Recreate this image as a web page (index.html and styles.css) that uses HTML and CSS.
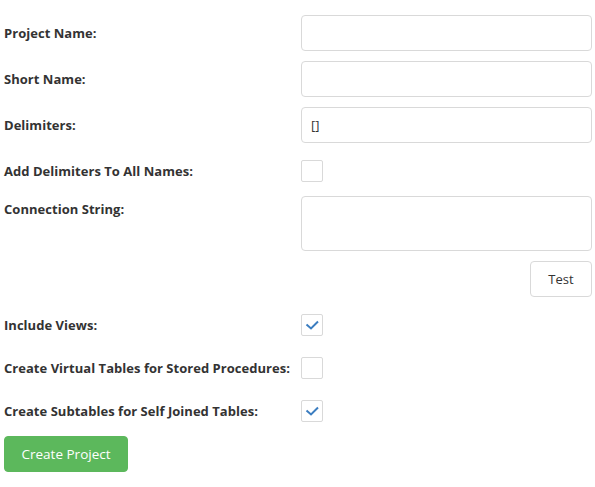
FILE: index.html
```html
<!DOCTYPE html>
<html>
<head>
<meta charset="utf-8">
<link rel="stylesheet" href="styles.css">
</head>
<body>
<form class="form">
  <div class="row row-first">
    <label class="label">Project Name:</label>
    <div class="control"><input class="input" type="text"></div>
  </div>
  <div class="row">
    <label class="label">Short Name:</label>
    <div class="control"><input class="input" type="text"></div>
  </div>
  <div class="row">
    <label class="label">Delimiters:</label>
    <div class="control"><input class="input" type="text" value="[]"></div>
  </div>
  <div class="row">
    <label class="label">Add Delimiters To All Names:</label>
    <div class="control"><span class="check"></span></div>
  </div>
  <div class="row row-top row-area">
    <label class="label label-top">Connection String:</label>
    <div class="control"><textarea class="input textarea"></textarea></div>
  </div>
  <div class="row row-test">
    <div class="label"></div>
    <div class="control control-right"><button type="button" class="btn btn-default">Test</button></div>
  </div>
  <div class="row row-check1">
    <label class="label">Include Views:</label>
    <div class="control"><span class="check"><svg viewBox="0 0 22 22" width="22" height="22"><path d="M5.5 10.5 L10 14.5 L17 7.5" fill="none" stroke="#3b7dc0" stroke-width="2"/></svg></span></div>
  </div>
  <div class="row row-check">
    <label class="label">Create Virtual Tables for Stored Procedures:</label>
    <div class="control"><span class="check"></span></div>
  </div>
  <div class="row row-check">
    <label class="label">Create Subtables for Self Joined Tables:</label>
    <div class="control"><span class="check"><svg viewBox="0 0 22 22" width="22" height="22"><path d="M5.5 10.5 L10 14.5 L17 7.5" fill="none" stroke="#3b7dc0" stroke-width="2"/></svg></span></div>
  </div>
  <div class="actions">
    <button type="button" class="btn btn-success">Create Project</button>
  </div>
</form>
</body>
</html>
```

FILE: styles.css
```css
* { box-sizing: border-box; }
html, body { margin: 0; padding: 0; background: #fff; }
body {
  font-family: "Open Sans", "Noto Sans", sans-serif;
  font-size: 13px;
  color: #333;
}
.form {
  display: flex;
  flex-direction: column;
  padding: 15px 3px 0 4px;
}
.row {
  display: flex;
  align-items: center;
  height: 36px;
  margin-top: 10px;
}
.row-first { margin-top: 0; }
.row-area {
  height: 55px;
  margin-top: 7px;
  align-items: flex-start;
}
.row-test { margin-top: 10px; }
.row-check1 { margin-top: 10px; }
.row-check { margin-top: 7px; }
.label {
  width: 297px;
  flex: none;
  font-weight: 700;
  font-size: 13px;
  color: #333;
  letter-spacing: 0.03px;
}
.label-top { padding-top: 4px; }
.control {
  flex: 1;
  display: flex;
  align-items: center;
  height: 100%;
}
.control-right { justify-content: flex-end; }
.input {
  width: 100%;
  height: 36px;
  border: 1px solid #d9d9d9;
  border-radius: 4px;
  padding: 0 9px;
  font-family: inherit;
  font-size: 13px;
  color: #333;
  background: #fff;
  outline: none;
}
.textarea {
  height: 55px;
  resize: none;
  display: block;
}
.check {
  display: block;
  width: 22px;
  height: 22px;
  border: 1px solid #d9d9d9;
  border-radius: 2px;
  background: #fff;
  position: relative;
}
.check svg {
  position: absolute;
  left: -1px;
  top: -1px;
}
.btn {
  font-family: inherit;
  font-size: 13px;
  height: 36px;
  border-radius: 4px;
  cursor: pointer;
}
.btn-default {
  width: 62px;
  background: #fff;
  border: 1px solid #d9d9d9;
  color: #333;
}
.actions {
  margin-top: 7px;
  display: flex;
}
.btn-success {
  width: 124px;
  background: #5cb85c;
  border: 1px solid #5cb85c;
  color: #fff;
  font-size: 13.5px;
}
```
